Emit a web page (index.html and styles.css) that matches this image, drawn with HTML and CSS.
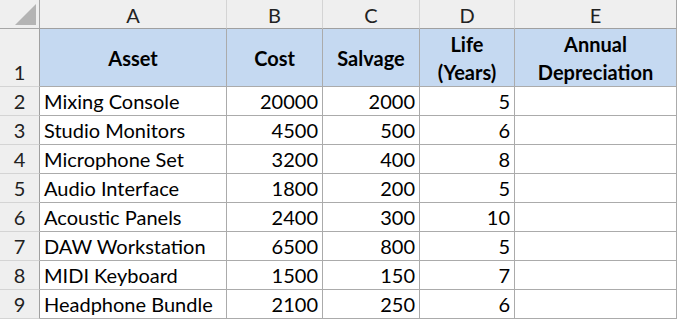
FILE: index.html
```html
<!DOCTYPE html>
<html>
<head>
<meta charset="utf-8">
<link rel="stylesheet" href="styles.css">
</head>
<body>
<div class="sheet">
  <div class="corner"><svg class="tri" width="22" height="22" viewBox="0 0 22 22"><polygon points="21,0 21,21 0,21" fill="#b4b4b4"/></svg></div>
  <div class="colhead">A</div>
  <div class="colhead">B</div>
  <div class="colhead">C</div>
  <div class="colhead">D</div>
  <div class="colhead last">E</div>

  <div class="rowhead">1</div>
  <div class="cell th">Asset</div>
  <div class="cell th">Cost</div>
  <div class="cell th">Salvage</div>
  <div class="cell th">Life<br>(Years)</div>
  <div class="cell th last">Annual<br>Depreciation</div>

  <div class="rowhead">2</div>
  <div class="cell txt">Mixing Console</div>
  <div class="cell num">20000</div>
  <div class="cell num">2000</div>
  <div class="cell num">5</div>
  <div class="cell last"></div>

  <div class="rowhead">3</div>
  <div class="cell txt">Studio Monitors</div>
  <div class="cell num">4500</div>
  <div class="cell num">500</div>
  <div class="cell num">6</div>
  <div class="cell last"></div>

  <div class="rowhead">4</div>
  <div class="cell txt">Microphone Set</div>
  <div class="cell num">3200</div>
  <div class="cell num">400</div>
  <div class="cell num">8</div>
  <div class="cell last"></div>

  <div class="rowhead">5</div>
  <div class="cell txt">Audio Interface</div>
  <div class="cell num">1800</div>
  <div class="cell num">200</div>
  <div class="cell num">5</div>
  <div class="cell last"></div>

  <div class="rowhead">6</div>
  <div class="cell txt">Acoustic Panels</div>
  <div class="cell num">2400</div>
  <div class="cell num">300</div>
  <div class="cell num">10</div>
  <div class="cell last"></div>

  <div class="rowhead">7</div>
  <div class="cell txt">DAW Workstation</div>
  <div class="cell num">6500</div>
  <div class="cell num">800</div>
  <div class="cell num">5</div>
  <div class="cell last"></div>

  <div class="rowhead">8</div>
  <div class="cell txt">MIDI Keyboard</div>
  <div class="cell num">1500</div>
  <div class="cell num">150</div>
  <div class="cell num">7</div>
  <div class="cell last"></div>

  <div class="rowhead">9</div>
  <div class="cell txt">Headphone Bundle</div>
  <div class="cell num">2100</div>
  <div class="cell num">250</div>
  <div class="cell num">6</div>
  <div class="cell last"></div>
</div>
</body>
</html>
```
FILE: styles.css
```css
* { box-sizing: border-box; }
html, body { margin: 0; padding: 0; background: #fff; }
body { font-family: Lato, "Open Sans", sans-serif; font-size: 20px; color: #000; }
.sheet {
  display: grid;
  grid-template-columns: 40px 187px 96px 97px 95px 162px;
  grid-template-rows: 29px 58px repeat(8, 29px);
  width: 677px;
}
.corner {
  background: #efefef;
  border-right: 1px solid #a6a6a6;
  border-bottom: 1px solid #a6a6a6;
  position: relative;
}
.tri { position: absolute; left: 15px; top: 4px; }
.colhead {
  background: #efefef;
  border-right: 1px solid #d4d4d4;
  border-bottom: 1px solid #a0a0a0;
  display: flex; align-items: center; justify-content: center;
  color: #222;
  padding-top: 1px;
}
.colhead.last { border-right: 1px solid #a6a6a6; }
.rowhead {
  background: #efefef;
  border-right: 1px solid #a0a0a0;
  border-bottom: 1px solid #d4d4d4;
  display: flex; align-items: flex-end; justify-content: center;
  color: #222;
  padding-bottom: 2px;
}
.cell {
  border-right: 1px solid #ababab;
  border-bottom: 1px solid #ababab;
  display: flex; align-items: flex-end;
  padding: 0 4px 2px;
  white-space: nowrap;
}
.num { justify-content: flex-end; }
.th {
  background: #c5d9f1;
  font-weight: bold;
  justify-content: center;
  align-items: center;
  text-align: center;
  line-height: 28px;
  padding: 0 4px;
}
```
